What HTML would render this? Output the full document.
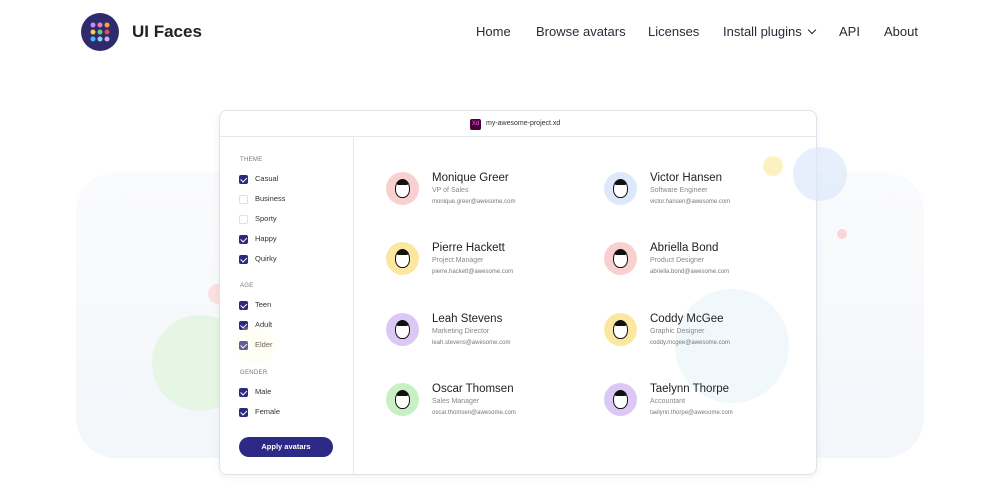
<!DOCTYPE html>
<html><head><meta charset="utf-8"><style>
*{margin:0;padding:0;box-sizing:border-box}
body{width:1000px;height:500px;background:#fff;font-family:"Liberation Sans",sans-serif;position:relative;overflow:hidden;color:#222}
.abs{position:absolute}
.circ{position:absolute;border-radius:50%}
.nav a{position:absolute;top:24px;font-size:13px;color:#2a2a3a;text-decoration:none}
.card{position:absolute;left:219px;top:110px;width:598px;height:365px;background:#fff;border:1px solid #dde3ea;border-radius:8px;box-shadow:0 2px 8px rgba(0,0,0,.06)}
.hd{position:absolute;left:0;top:0;width:100%;height:26px;border-bottom:1px solid #e3e8ee}
.side{position:absolute;left:133px;top:26px;bottom:0;border-left:1px solid #e3e8ee}
.lbl{position:absolute;left:20px;font-size:6px;color:#777;letter-spacing:.3px}
.cb{position:absolute;left:19px;width:9px;height:9px;border-radius:2px}
.cb.on{background:#2d2a7e}
.cb.on:after{content:"";position:absolute;left:2.5px;top:1px;width:2.5px;height:4.5px;border:solid #fff;border-width:0 1.3px 1.3px 0;transform:rotate(45deg)}
.cb.off{border:1px solid #e0e0e0}
.ct{position:absolute;left:35px;font-size:7.5px;color:#333}
.p{position:absolute}
.av{position:absolute;width:33px;height:33px;border-radius:50%}
.nm{position:absolute;left:46px;top:0;font-size:11.5px;color:#222;white-space:nowrap}
.rl{position:absolute;left:46px;top:15px;font-size:7px;color:#888;white-space:nowrap}
.em{position:absolute;left:46px;top:27px;font-size:6px;color:#777;white-space:nowrap}
.face{position:absolute;left:9px;top:7px;width:15px;height:19px;border:1.5px solid #111;border-radius:50% 50% 45% 45%;background:#fff}
.face:before{content:"";position:absolute;left:1px;right:1px;top:0;height:5px;background:#111;border-radius:6px 6px 2px 2px}
</style></head><body>
<div class="abs" style="left:76px;top:172px;width:848px;height:286px;background:linear-gradient(#fafbfd,#f3f6fa);border-radius:40px"></div>
<div class="circ" style="left:152px;top:315px;width:96px;height:96px;background:#e6f6e4"></div>
<div class="circ" style="left:208px;top:284px;width:20px;height:20px;background:#fbe0e0"></div>
<div class="circ" style="left:837px;top:229px;width:10px;height:10px;background:#f8d7da"></div>

<div class="circ" style="left:81px;top:13px;width:38px;height:38px;background:#2e2a6b"></div>
<svg class="abs" style="left:81px;top:13px" width="38" height="38">
<g><circle cx="12" cy="12" r="2.5" fill="#c58af0"/><circle cx="19" cy="12" r="2.5" fill="#f07fb0"/><circle cx="26" cy="12" r="2.5" fill="#f5a442"/>
<circle cx="12" cy="19" r="2.5" fill="#f5d142"/><circle cx="19" cy="19" r="2.5" fill="#5fd17a"/><circle cx="26" cy="19" r="2.5" fill="#e24b5b"/>
<circle cx="12" cy="26" r="2.5" fill="#42b8f5"/><circle cx="19" cy="26" r="2.5" fill="#8fd0f5"/><circle cx="26" cy="26" r="2.5" fill="#c9b0e6"/></g></svg>
<div class="abs" style="left:132px;top:22px;font-size:17px;font-weight:bold;color:#222">UI Faces</div>
<div class="nav">
<a style="left:476px">Home</a><a style="left:536px">Browse avatars</a><a style="left:648px">Licenses</a><a style="left:723px">Install plugins</a><a style="left:839px">API</a><a style="left:884px">About</a>
</div>
<div class="abs" style="left:809px;top:27px;width:6px;height:6px;border:solid #222;border-width:0 1.6px 1.6px 0;transform:rotate(45deg)"></div>

<div class="card">
<div class="hd"><div class="abs" style="left:250px;top:8px;width:11px;height:11px;background:#470137;border-radius:2px;color:#ff61f6;font-size:6px;text-align:center;line-height:11px">Xd</div><div class="abs" style="left:266px;top:9px;font-size:7px;color:#333">my-awesome-project.xd</div></div>
<div class="side"></div>
<div class="lbl" style="top:46px">THEME</div>
<div class="cb on" style="top:64px"></div><div class="ct" style="top:63px">Casual</div>
<div class="cb off" style="top:84px"></div><div class="ct" style="top:83px">Business</div>
<div class="cb off" style="top:104px"></div><div class="ct" style="top:103px">Sporty</div>
<div class="cb on" style="top:124px"></div><div class="ct" style="top:123px">Happy</div>
<div class="cb on" style="top:144px"></div><div class="ct" style="top:143px">Quirky</div>
<div class="lbl" style="top:172px">AGE</div>
<div class="cb on" style="top:190px"></div><div class="ct" style="top:189px">Teen</div>
<div class="cb on" style="top:210px"></div><div class="ct" style="top:209px">Adult</div>
<div class="cb on" style="top:230px"></div><div class="ct" style="top:229px">Elder</div>
<div class="lbl" style="top:259px">GENDER</div>
<div class="cb on" style="top:277px"></div><div class="ct" style="top:276px">Male</div>
<div class="cb on" style="top:297px"></div><div class="ct" style="top:296px">Female</div>
<div class="abs" style="left:19px;top:326px;width:94px;height:20px;background:#2d2a87;border-radius:10px;color:#fff;font-size:7.5px;font-weight:bold;text-align:center;line-height:20px">Apply avatars</div>
<div class="circ" style="left:455px;top:178px;width:114px;height:114px;background:rgba(230,243,250,.6)"></div>

<div class="p" style="left:166px;top:61px"><div class="av" style="background:#f8d0d0"><div class="face"></div></div><div class="nm">Monique Greer</div><div class="rl">VP of Sales</div><div class="em">monique.greer@awesome.com</div></div>
<div class="p" style="left:166px;top:131px"><div class="av" style="background:#fbe7a0"><div class="face"></div></div><div class="nm">Pierre Hackett</div><div class="rl">Project Manager</div><div class="em">pierre.hackett@awesome.com</div></div>
<div class="p" style="left:166px;top:202px"><div class="av" style="background:#dcc8f5"><div class="face"></div></div><div class="nm">Leah Stevens</div><div class="rl">Marketing Director</div><div class="em">leah.stevens@awesome.com</div></div>
<div class="p" style="left:166px;top:272px"><div class="av" style="background:#c9f0c4"><div class="face"></div></div><div class="nm">Oscar Thomsen</div><div class="rl">Sales Manager</div><div class="em">oscar.thomsen@awesome.com</div></div>
<div class="p" style="left:384px;top:61px"><div class="av" style="background:#dde8fa"><div class="face"></div></div><div class="nm">Victor Hansen</div><div class="rl">Software Engineer</div><div class="em">victor.hansen@awesome.com</div></div>
<div class="p" style="left:384px;top:131px"><div class="av" style="background:#f8d0d0"><div class="face"></div></div><div class="nm">Abriella Bond</div><div class="rl">Product Designer</div><div class="em">abriella.bond@awesome.com</div></div>
<div class="p" style="left:384px;top:202px"><div class="av" style="background:#fbe7a0"><div class="face"></div></div><div class="nm">Coddy McGee</div><div class="rl">Graphic Designer</div><div class="em">coddy.mcgee@awesome.com</div></div>
<div class="p" style="left:384px;top:272px"><div class="av" style="background:#dcc8f5"><div class="face"></div></div><div class="nm">Taelynn Thorpe</div><div class="rl">Accountant</div><div class="em">taelynn.thorpe@awesome.com</div></div>
</div>
<div class="circ" style="left:235px;top:325px;width:40px;height:40px;background:rgba(250,250,215,.25)"></div>
<div class="circ" style="left:763px;top:156px;width:20px;height:20px;background:rgba(250,235,170,.7)"></div>
<div class="circ" style="left:793px;top:147px;width:54px;height:54px;background:rgba(220,232,250,.7)"></div>
</body></html>
